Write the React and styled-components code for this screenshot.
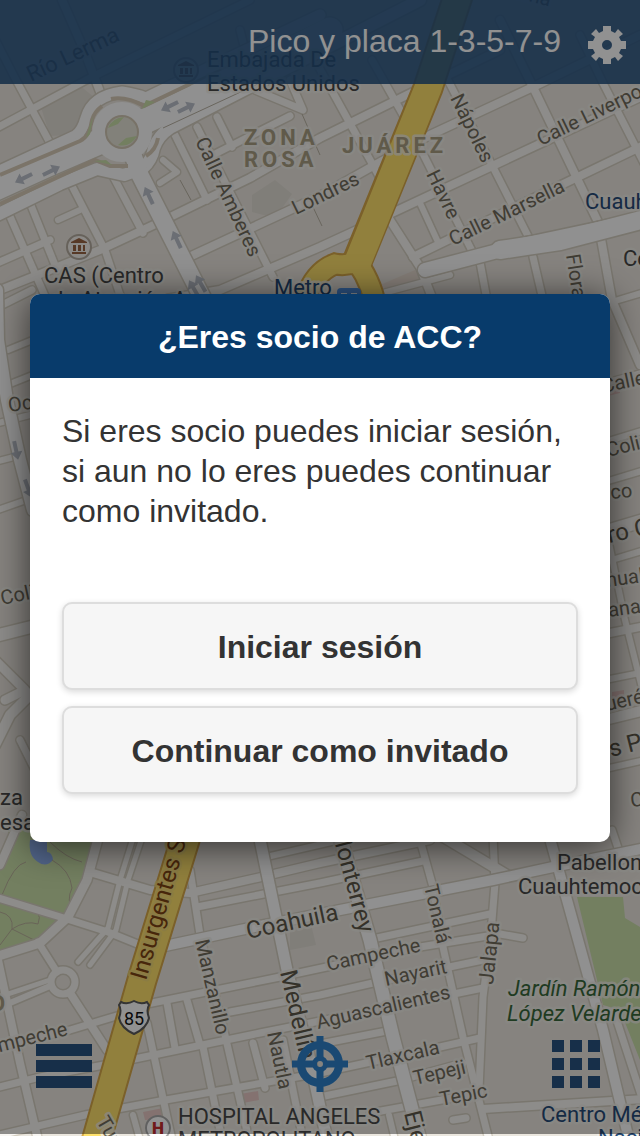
import React from "react";
import styled, { createGlobalStyle } from "styled-components";

const GlobalStyle = createGlobalStyle`
  *, *::before, *::after { box-sizing: border-box; }
  body {
    margin: 0;
    background: #e9e5dc;
    font-family: "Liberation Sans", Arial, sans-serif;
  }
`;

const Screen = styled.div`
  position: relative;
  display: flex;
  flex-direction: column;
  justify-content: space-between;
  min-height: 100vh;
  overflow: hidden;
`;

const MapCanvas = styled.svg`
  position: absolute;
  inset: 0;
  width: 100%;
  height: 100%;
  font-family: Roboto, sans-serif;
`;

const TopBar = styled.header`
  position: relative;
  display: flex;
  align-items: center;
  justify-content: flex-end;
  gap: 24px;
  height: 84px;
  padding: 0 11px;
  background: rgba(36, 80, 128, 0.87);
`;

const TopBarText = styled.span`
  padding-bottom: 2px;
  color: #fff;
  font-size: 32px;
  line-height: 40px;
`;

const IconButton = styled.button`
  display: flex;
  align-items: center;
  justify-content: center;
  width: ${(p) => p.$size}px;
  height: ${(p) => p.$size}px;
  padding: 0;
  border: 0;
  background: none;
  color: ${(p) => p.$color};
`;

const SettingsButton = styled(IconButton)`
  padding-top: 6px;
`;

const BottomBar = styled.nav`
  position: relative;
  display: flex;
  align-items: center;
  justify-content: space-between;
  padding: 0 36px 44px;
`;

const Scrim = styled.div`
  position: absolute;
  inset: 0 0 2px;
  background: rgba(0, 0, 0, 0.43);
`;

const DialogLayer = styled.div`
  position: absolute;
  inset: 0;
  display: flex;
  align-items: center;
  justify-content: center;
  padding: 30px;
`;

const Dialog = styled.section`
  flex: 1;
  max-width: 640px;
  overflow: hidden;
  border-radius: 10px;
  background: #fff;
  color: #333;
  box-shadow: 0 4px 36px rgba(0, 0, 0, 0.65);
`;

const DialogTitle = styled.h1`
  margin: 0;
  padding: 23px 32px 21px;
  background: #083b6b;
  color: #fff;
  font-size: 32px;
  line-height: 40px;
  text-align: center;
`;

const DialogBody = styled.div`
  display: flex;
  flex-direction: column;
  gap: 16px;
  padding: 33px 32px 48px;
`;

const DialogText = styled.p`
  margin: 0 0 55px;
  font-size: 32px;
  line-height: 40px;
`;

const DialogButton = styled.button`
  height: 88px;
  padding: 2px 0 0;
  border: 2px solid #ddd;
  border-radius: 10px;
  background: #f6f6f6;
  color: #333;
  font: bold 32px/40px "Liberation Sans", Arial, sans-serif;
  box-shadow: 0 2px 6px rgba(0, 0, 0, 0.15);
`;

const STREETS = [
  [7, "M-20 10L15 78L50 143"],
  [8, "M62 0L84 50L102 97"],
  [7, "M-5 129L90 78L250 0"],
  [7, "M8 212L60 330"],
  [7, "M30 203L57 270"],
  [7, "M72 186L105 250L120 295"],
  [7, "M114 178L143 233"],
  [6, "M58 220L80 210"],
  [7, "M-5 264L50 240"],
  [8, "M0 290L100 250L160 222L250 178L320 138L413 92L500 50"],
  [7, "M213 155L262 130L290 116"],
  [8, "M187 258L320 196L373 166L430 135L533 87L640 35"],
  [8, "M160 300L220 290L320 247L357 230L392 213L533 147L660 88"],
  [8, "M413 257L530 200L640 147L660 138"],
  [6, "M163 160L177 172L160 183"],
  [7, "M175 135L207 200"],
  [7, "M197 127L273 277"],
  [7, "M217 117L232 147"],
  [7, "M240 30L255 90L303 110L290 80"],
  [7, "M315 60L380 178"],
  [7, "M372 60L407 122L473 253"],
  [7, "M440 65L493 167L530 240"],
  [8, "M500 20L533 87L598 222L612 300L640 365"],
  [7, "M580 35L603 83L645 165"],
  [8, "M388 217L420 267L433 300"],
  [6, "M420 203L437 240"],
  [7, "M533 257L543 300"],
  [7, "M480 262L487 300"],
  [6, "M383 293L450 275"],
  [7, "M0 306L32 290"],
  [6, "M8 350L35 339"],
  [6, "M10 384L35 374"],
  [6, "M-5 424L30 415"],
  [6, "M-5 462L14 457"],
  [6, "M-5 511L35 497"],
  [9, "M-5 660L25 690L5 700"],
  [10, "M-5 745L10 715L35 690"],
  [7, "M20 740L35 770"],
  [12, "M-5 636L35 626"],
  [6, "M605 304L645 292"],
  [6, "M605 383L645 372"],
  [6, "M605 442L645 430"],
  [6, "M605 482L645 470"],
  [13, "M605 532L645 520"],
  [6, "M605 562L645 550"],
  [6, "M600 500L625 620L645 700"],
  [8, "M605 634L645 626"],
  [6, "M605 680L645 672"],
  [10, "M605 720L645 710"],
  [6, "M605 769L645 760"],
  [8, "M22 815L0 865"],
  [7, "M-5 897L67 919L108 932L140 945"],
  [9, "M99 835L87 880L68 917L40 943L-5 957"],
  [5, "M143 835L128 880L116 930L90 965"],
  [5, "M134 835L120 880L108 928L78 962"],
  [8, "M93 873L150 890L190 893L257 878L320 863L430 840"],
  [7, "M197 907L320 883L423 861"],
  [7, "M190 870L200 935L225 1035L249 1140"],
  [7, "M203 1047L222 1140"],
  [6, "M262 858L340 840"],
  [7, "M420 840L433 887L443 947L463 1037L489 1140"],
  [7, "M493 835L495 883L491 933L483 997L479 1090"],
  [10, "M440 835L507 875"],
  [7, "M377 938L490 914"],
  [7, "M147 1004L280 977L420 947L500 934L523 938"],
  [7, "M230 1012L320 995L373 983L483 960"],
  [7, "M-5 1048L70 1030L120 1015"],
  [7, "M-5 1088L40 1077L120 1062L260 1033L400 1005L483 988"],
  [7, "M320 1044L387 1031"],
  [7, "M-5 1136L85 1115L160 1101L320 1073L440 1047L480 1038"],
  [7, "M320 1097L397 1081L463 1063"],
  [7, "M370 1113L480 1093"],
  [8, "M483 1109L645 1099"],
  [7, "M453 1120L466 1118"],
  [8, "M-2 960L20 1063L38 1140"],
  [7, "M57 972L38 942"],
  [6, "M50 986L10 1003"],
  [5, "M50 980L8 994"],
  [8, "M70 993L107 1050"],
  [7, "M167 1003L175 1048"],
  [7, "M187 1000L200 1045"],
  [7, "M147 1023L167 1117L172 1140"],
  [7, "M253 1043L265 1088"],
  [7, "M283 1040L303 1140"],
  [6, "M133 1115L140 1140"],
  [6, "M389 1115L395 1140"],
  [7, "M615 1015L645 1107"],
  [7, "M612 830L622 860"],
];

const AVENUES = [
  [11, "M-5 173L75 136Q82 132 86 118Q92 96 122 92Q136 94 146 98L200 72L320 15"],
  [12, "M-5 216L60 184L97 169L124 175L143 168Q152 160 154 148Q158 136 170 128L240 92L420 0"],
  [25, "M-5 188L50 163L122 132L200 95L330 30"],
  [17, "M134 158L140 175L206 305"],
  [14, "M425 270L513 247L645 219"],
  [18, "M500 250L560 241L645 219"],
  [12, "M-3 290L-2 340L7 400L20 460L33 510"],
  [10, "M165 946L240 930L340 910L493 880L553 867L645 848"],
  [11, "M258 830L287 970L310 1060L327 1140"],
  [13, "M338 830L370 940L393 1037L420 1140"],
  [10, "M549 835L603 1030L629 1140"],
];

const ARROWS = [
  [170, 106, -26, 1], [186, 108, -26, 0], [24, 178, -26, 1], [51, 171, -26, 0],
  [149, 196, -115, 0], [177, 240, -115, 0], [194, 289, -120, 0], [201, 284, -120, 0],
  [16, 450, 78, 0], [28, 488, 70, 0],
];

const street = { fill: "#716b5c", size: 20 };
const avenue = { fill: "#5e584a", size: 24 };
const place = { fill: "#484848", size: 22 };
const station = { fill: "#254a78", size: 22 };
const district = { fill: "#a99e83", size: 22, weight: 700, spacing: 4 };
const park = { fill: "#38683a", size: 22, italic: true };

const LABELS = [
  ["Río Lerma", 31, 82, -25, { ...street, size: 22 }],
  ["Embajada De", 207, 67, 0, place],
  ["Estados Unidos", 207, 91, 0, place],
  ["Roma", 499, -7, 15, street],
  ["ZONA", 244, 145, 0, district],
  ["ROSA", 244, 167, 0, district],
  ["JUÁREZ", 342, 153, 0, district],
  ["Calle Amberes", 195, 141, 65, street],
  ["Londres", 296, 215, -26, street],
  ["Nápoles", 450, 98, 64, street],
  ["Havre", 426, 174, 64, street],
  ["Calle Liverpool", 541, 146, -26, street],
  ["Calle Marsella", 453, 246, -26, street],
  ["Cuauhtémoc", 585, 209, 0, station],
  ["CAS (Centro", 44, 283, 0, place],
  ["de Atención A", 51, 307, 0, place],
  ["Metro", 274, 295, 0, station],
  ["Flora", 566, 255, 81, street],
  ["Centro", 623, 266, 0, place],
  ["Ocampo", 9, 412, -8, street],
  ["Colima", 2, 605, -12, street],
  ["za", 0, 805, 0, place],
  ["esa", 0, 830, 0, place],
  ["Calle", 603, 393, -12, street],
  ["Colima", 608, 457, -14, street],
  ["co", 611, 499, -6, street],
  ["ro C", 609, 543, -12, avenue],
  ["nual", 607, 587, -8, street],
  ["ana", 609, 617, -8, street],
  ["ueré", 607, 711, -13, street],
  ["s P", 611, 757, -14, avenue],
  ["C", 631, 807, -6, street],
  ["Insurgentes Sur", 146, 981, -74, { fill: "#7d4414", size: 24, halo: "#f2d87b" }],
  ["Coahuila", 248, 939, -12, avenue],
  ["Monterrey", 331, 829, 75, avenue],
  ["Manzanillo", 195, 941, 77, street],
  ["Medellín", 280, 972, 77, avenue],
  ["Nautla", 267, 1033, 78, street],
  ["Tonalá", 424, 886, 77, street],
  ["Jalapa", 493, 985, -84, { ...street, size: 21 }],
  ["Campeche", 328, 971, -12, street],
  ["Nayarit", 386, 986, -12, street],
  ["Aguascalientes", 318, 1029, -13, street],
  ["Tlaxcala", 368, 1070, -13, street],
  ["Tepeji", 415, 1085, -13, street],
  ["Tepic", 441, 1106, -11, street],
  ["Campeche", -24, 1058, -14, street],
  ["Pabellon", 557, 870, 0, place],
  ["Cuauhtemoc", 518, 894, 0, place],
  ["Jardín Ramón", 508, 996, 0, park],
  ["López Velarde", 507, 1021, 0, park],
  ["Centro Médico", 541, 1122, 0, station],
  ["Nacional", 598, 1145, 0, station],
  ["HOSPITAL ANGELES", 178, 1124, 0, place],
  ["METROPOLITANO", 178, 1147, 0, place],
  ["Tuxpan", 96, 1121, 60, street],
  ["Eje 2", 404, 1113, 76, avenue],
  ["O", -10, 1011, 0, { ...district, spacing: 0 }],
];

function RoadCasings({ items }) {
  return (
    <g fill="none" stroke="#d5cfc2" strokeLinecap="round" strokeLinejoin="round">
      {items.map(([w, d]) => (
        <path key={d} d={d} strokeWidth={w + 3} />
      ))}
    </g>
  );
}

function RoadFills({ items, color }) {
  return (
    <g fill="none" stroke={color} strokeLinecap="round" strokeLinejoin="round">
      {items.map(([w, d]) => (
        <path key={d} d={d} strokeWidth={w} />
      ))}
    </g>
  );
}

function MapLabel({ item }) {
  const [text, x, y, angle, s] = item;
  return (
    <text
      transform={`translate(${x} ${y}) rotate(${angle})`}
      fill={s.fill}
      fontSize={s.size}
      fontWeight={s.weight || 400}
      fontStyle={s.italic ? "italic" : "normal"}
      letterSpacing={s.spacing || 0}
      stroke={s.halo || "#f1efe9"}
      strokeWidth="5"
      strokeOpacity="0.8"
      strokeLinejoin="round"
      paintOrder="stroke"
    >
      {text}
    </text>
  );
}

function Museum({ x, y }) {
  return (
    <g transform={`translate(${x} ${y})`}>
      <circle r="12" fill="#f4f1ec" stroke="#b5aca0" strokeWidth="2" />
      <path
        d="M0 -9L8 -5V-4H-8V-5ZM-6 -2H-3V4H-6ZM-1 -2H2V4H-1ZM4 -2H6V4H4ZM-7 5H7V7H-7Z"
        fill="#9a6544"
      />
    </g>
  );
}

function CityMap() {
  return (
    <MapCanvas viewBox="0 0 640 1136" preserveAspectRatio="xMidYMid slice" aria-hidden="true">
      <rect width="640" height="1136" fill="#ebe7df" />
      <path
        d="M40 104L78 84L95 98L82 122L68 135L50 136ZM252 195L275 180L292 194L275 218L252 212ZM290 930L310 920L316 945L290 950Z"
        fill="#e2ddd5"
      />
      <path d="M17 830H98L87 877L67 913L37 940L0 953V867Z" fill="#cadfaa" />
      <path
        d="M577 897H623L625 918L640 927V1060L620 1010L603 1005Z"
        fill="#cadfaa"
      />
      <path d="M22 822L8 840V830Z" fill="#cadfaa" />
      <path
        d="M30 840Q28 856 38 862Q46 868 53 860Q52 852 47 852V840Z"
        fill="#8fb0f0"
      />
      <g fill="none" stroke="#b9b19a" strokeWidth="1">
        <path d="M0 912Q14 915 12 929L0 945M12 929Q26 920 38 924Q44 910 24 906M12 929L38 942M52 860Q70 870 72 888Q66 900 73 912M50 842Q66 858 82 862M2 895Q14 864 26 862" />
      </g>
      <path
        d="M608 392L620 388V393L608 396ZM612 692L624 690V696L612 699ZM240 1094L258 1091L259 1100L243 1103ZM143 1112L163 1108L165 1120H145Z"
        fill="#e8c9c6"
      />
      <path d="M380 285L415 270L420 280L384 292Z" fill="#e8dcd2" />
      <RoadCasings items={STREETS} />
      <circle cx="63" cy="982" r="12" fill="none" stroke="#d5cfc2" strokeWidth="10" />
      <RoadFills items={STREETS} color="#f8f6f3" />
      <circle cx="63" cy="982" r="12" fill="none" stroke="#f8f6f3" strokeWidth="7" />
      <RoadCasings items={AVENUES} />
      <RoadFills items={AVENUES} color="#fdfdfd" />
      <g fill="none" stroke="#d9cdb9" strokeWidth="4">
        <path d="M0 175L80 141Q90 136 92 120Q94 112 102 106M0 204L95 160L110 166H128M111 99Q126 96 144 106L190 84M146 156Q156 150 158 138" />
      </g>
      <path d="M86 138Q90 124 93 116L90 134ZM94 161L106 160L112 165ZM142 109L155 102L146 100Z" fill="#cadfaa" />
      <circle cx="122" cy="132" r="23" fill="none" stroke="#fdfdfd" strokeWidth="14" />
      <circle cx="122" cy="132" r="16" fill="#e5e3d6" stroke="#d3c9b6" strokeWidth="2" />
      <path d="M108 128Q112 118 124 117L118 124ZM118 145Q130 148 137 136L126 138Z" fill="#cadfaa" />
      <path d="M163 128L260 83M180 180L191 200M302 114L320 155M312 205L322 226" stroke="#b9b2a4" fill="none" />

      <g fill="none" strokeLinecap="butt">
        <path d="M460 -10L428 88L357 262M205 770L185 840L142 980L95 1145" stroke="#d8a94a" strokeWidth="31" />
        <path d="M377 315Q374 286 357 262Q346 266 335 264Q314 272 305 300" stroke="#d8a94a" strokeWidth="23" />
        <path d="M460 -10L428 88L357 264M205 770L185 840L142 980L95 1145" stroke="#ffe26c" strokeWidth="27" />
        <path d="M377 315Q374 286 357 262Q346 266 335 264Q314 272 305 300" stroke="#ffe26c" strokeWidth="19" />
      </g>

      {ARROWS.map(([x, y, angle, back]) => (
        <path
          key={`${x}-${y}`}
          transform={`translate(${x} ${y}) rotate(${angle + back * 180})`}
          d="M-9 -2H2V-6L10 0L2 6V2H-9Z"
          fill="#bcc2cc"
        />
      ))}

      {LABELS.map((item) => (
        <MapLabel key={`${item[0]}-${item[1]}-${item[2]}`} item={item} />
      ))}

      <Museum x={79} y={247} />
      <Museum x={186} y={70} />
      <rect x="337" y="288" width="24" height="16" rx="4" fill="#4f93e6" />
      <path d="M341 293H347V299H341ZM351 293H357V299H351Z" fill="#eef4fc" />
      <path
        d="M121 1002Q127 1005 134 1001Q141 1005 147 1002L149 1005Q146 1010 149 1018Q147 1028 134 1034Q121 1028 119 1018Q122 1010 119 1005Z"
        fill="#fff"
        stroke="#5c5c5c"
        strokeWidth="2"
      />
      <text x="134" y="1025" fontSize="18" textAnchor="middle" fill="#111">85</text>
      <circle cx="158" cy="1128" r="12" fill="#fff" stroke="#aaa" strokeWidth="2" />
      <text x="158" y="1134" fontSize="17" fontWeight="900" textAnchor="middle" fill="#c62f2f">H</text>
    </MapCanvas>
  );
}

function GearIcon() {
  return (
    <svg width="38" height="38" viewBox="-19 -19 38 38" fill="currentColor" aria-hidden="true">
      <path
        fillRule="evenodd"
        d="M-4 -19H4V-14L8 -12L11 -16L16 -11L12 -8L14 -4H19V4H14L12 8L16 11L11 16L8 12L4 14V19H-4V14L-8 12L-11 16L-16 11L-12 8L-14 4H-19V-4H-14L-12 -8L-16 -11L-11 -16L-8 -12L-4 -14ZM0 -5A5 5 0 1 0 0 5A5 5 0 1 0 0 -5Z"
      />
    </svg>
  );
}

function MenuIcon() {
  return (
    <svg width="56" height="48" viewBox="0 -4 56 48" fill="currentColor" aria-hidden="true">
      <path d="M0 0H56V12H0ZM0 16H56V28H0ZM0 32H56V44H0Z" />
    </svg>
  );
}

function TargetIcon() {
  return (
    <svg width="56" height="56" viewBox="-28 -28 56 56" fill="none" stroke="currentColor" aria-hidden="true">
      <circle r="19" strokeWidth="8" />
      <circle r="5.5" strokeWidth="5" />
      <path d="M0 -28V-5M0 28V5M-28 0H-5M28 0H5" strokeWidth="7" />
    </svg>
  );
}

function GridIcon() {
  const cells = [0, 18, 36];
  return (
    <svg width="48" height="48" viewBox="0 0 48 48" fill="currentColor" aria-hidden="true">
      {cells.map((y) =>
        cells.map((x) => <rect key={`${x}-${y}`} x={x} y={y} width="12" height="12" />)
      )}
    </svg>
  );
}

export default function App() {
  return (
    <>
      <GlobalStyle />
      <Screen>
        <CityMap />
        <TopBar>
          <TopBarText>Pico y placa 1-3-5-7-9</TopBarText>
          <SettingsButton $size={44} $color="#fff" aria-label="Ajustes">
            <GearIcon />
          </SettingsButton>
        </TopBar>
        <BottomBar>
          <IconButton $size={56} $color="#2a5480" aria-label="Menú">
            <MenuIcon />
          </IconButton>
          <IconButton $size={56} $color="#2f81cb" aria-label="Mi ubicación">
            <TargetIcon />
          </IconButton>
          <IconButton $size={56} $color="#2a5480" aria-label="Servicios">
            <GridIcon />
          </IconButton>
        </BottomBar>
        <Scrim />
        <DialogLayer>
          <Dialog role="dialog" aria-modal="true" aria-labelledby="dialog-title">
            <DialogTitle id="dialog-title">¿Eres socio de ACC?</DialogTitle>
            <DialogBody>
              <DialogText>
                Si eres socio puedes iniciar sesión, si aun no lo eres puedes continuar como invitado.
              </DialogText>
              <DialogButton type="button">Iniciar sesión</DialogButton>
              <DialogButton type="button">Continuar como invitado</DialogButton>
            </DialogBody>
          </Dialog>
        </DialogLayer>
      </Screen>
    </>
  );
}
